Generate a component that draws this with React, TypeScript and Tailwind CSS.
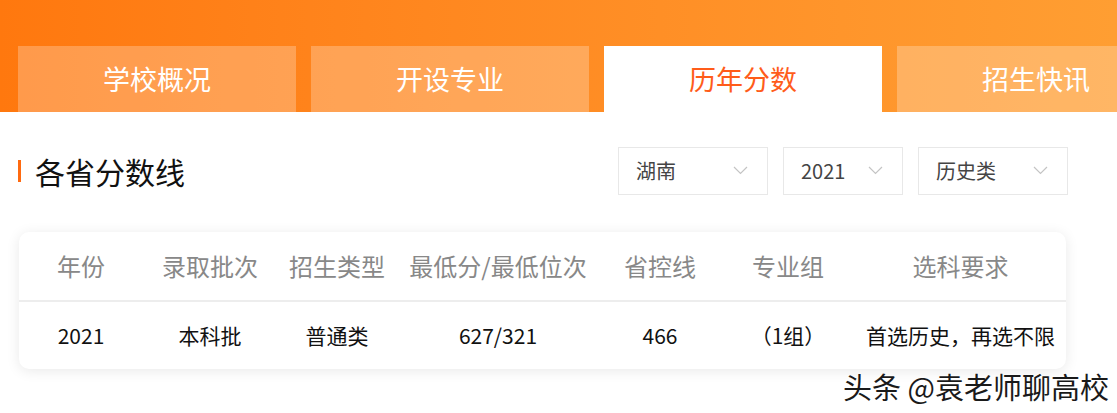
const TABS = ["学校概况", "开设专业", "历年分数", "招生快讯"];
const ACTIVE_TAB = 2;

const COLUMNS = ["年份", "录取批次", "招生类型", "最低分/最低位次", "省控线", "专业组", "选科要求"];
const ROW = ["2021", "本科批", "普通类", "627/321", "466", "（1组）", "首选历史，再选不限"];

const FONT = { fontFamily: '"Noto Sans CJK SC", "Noto Sans", sans-serif' };

// -----------------------------
// Select box
// -----------------------------
function SelectBox({ label, width }: { label: string; width: string }) {
  return (
    <div
      className={`${width} h-12 border border-[#e8e8e8] flex items-center justify-between pl-[17px] pr-[19px] text-[20px] text-[#444]`}
    >
      <span>{label}</span>
      <svg width="15" height="9" viewBox="0 0 15 9" fill="none" className="mb-[2px]">
        <path d="M1 1l6.5 6.5L14 1" stroke="#c4c4c4" strokeWidth="1.2" />
      </svg>
    </div>
  );
}

export default function App() {
  return (
    <div className="relative w-[1117px] h-[413px] bg-white overflow-hidden" style={FONT}>
      {/* Tabs */}
      <div className="h-[112px] bg-gradient-to-r from-[#ff780e] to-[#ff9e32] pt-[46px] pl-[18px] overflow-hidden">
        <div className="flex gap-[15px] h-[66px]">
          {TABS.map((tab, i) => (
            <div
              key={tab}
              className={`shrink-0 w-[278px] h-full flex items-center justify-center text-[27px] ${
                i === ACTIVE_TAB ? "bg-white text-[#ff5c1a]" : "bg-white/25 text-white"
              }`}
            >
              {tab}
            </div>
          ))}
        </div>
      </div>

      {/* Section header */}
      <div className="flex items-center justify-between pl-[18px] pr-[49px] pt-[35px]">
        <div className="flex items-center gap-[14px]">
          <div className="w-[3px] h-[22px] bg-[#ff6a10]" />
          <h2 className="text-[30px] text-[#111] leading-none">各省分数线</h2>
        </div>
        <div className="flex gap-[15px]">
          <SelectBox label="湖南" width="w-[150px]" />
          <SelectBox label="2021" width="w-[120px]" />
          <SelectBox label="历史类" width="w-[150px]" />
        </div>
      </div>

      {/* Table */}
      <div className="ml-[19px] mr-[51px] mt-[37px] rounded-[10px] bg-white shadow-[0_2px_14px_rgba(0,0,0,0.09)]">
        <div className="grid grid-cols-[124px_134px_120px_202px_122px_134px_1fr] h-[70px] items-center border-b-2 border-[#ededed] text-[24px] text-[#888]">
          {COLUMNS.map((c) => (
            <div key={c} className="text-center">
              {c}
            </div>
          ))}
        </div>
        <div className="grid grid-cols-[124px_134px_120px_202px_122px_134px_1fr] h-[67px] items-center text-[21px] text-[#111]">
          {ROW.map((c, i) => (
            <div key={i} className="text-center whitespace-nowrap">
              {c}
            </div>
          ))}
        </div>
      </div>

      {/* Watermark */}
      <div
        className="absolute left-[843px] top-[365px] text-[29px] text-[#1a1a1a] whitespace-nowrap"
        style={{ textShadow: "0 0 2px #fff, 0 0 2px #fff, 1px 1px 1px #fff" }}
      >
        头条 @袁老师聊高校
      </div>
    </div>
  );
}
